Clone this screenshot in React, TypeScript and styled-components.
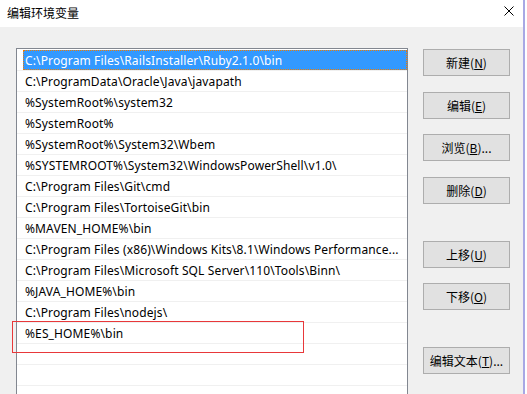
import React from "react";
import styled, { createGlobalStyle } from "styled-components";

const Global = createGlobalStyle`
  html, body { margin: 0; padding: 0; background: #ffffff; }
  body { font-family: "Noto Sans", "Noto Sans CJK SC", sans-serif; }
  * { box-sizing: border-box; }
`;

const Page = styled.div`
  display: flex;
  width: 527px;
  height: 394px;
  overflow: hidden;
`;

const Window = styled.div`
  width: 523px;
  height: 394px;
  background: #f0f0f0;
  display: flex;
  flex-direction: column;
  overflow: hidden;
`;

const Edge = styled.div`
  width: 2px;
  background: #a8a8e4;
`;

const TitleBar = styled.div`
  flex-shrink: 0;
  height: 27px;
  background: #ffffff;
  display: flex;
  align-items: center;
  justify-content: space-between;
  padding: 0 9px 2px 7px;
`;

const Title = styled.span`
  font-family: "Noto Sans CJK SC", sans-serif;
  font-size: 12px;
  color: #000;
`;

const CloseIcon = styled.svg`
  width: 10px;
  height: 10px;
  margin-bottom: 3px;
`;

const Body = styled.div`
  position: relative;
  flex: 1;
  min-height: 0;
  display: flex;
  align-items: flex-start;
  gap: 15px;
  padding: 21px 0 0 16px;
  overflow: hidden;
`;

const ListBox = styled.div`
  flex-shrink: 0;
  width: 392px;
  height: 360px;
  border: 1px solid #828790;
  background: #ffffff;
  padding-top: 1px;
  overflow: hidden;
`;

const Row = styled.div`
  height: 21px;
  border-bottom: 1px solid #f0f0f0;
  display: flex;
`;

const Item = styled.div<{ $selected?: boolean }>`
  flex: 1;
  margin-left: 6px;
  padding-left: 2px;
  display: flex;
  align-items: center;
  font-family: "Noto Sans", "Noto Sans CJK SC", sans-serif;
  font-size: 12px;
  letter-spacing: 0.13px;
  white-space: nowrap;
  color: ${(p) => (p.$selected ? "#ffffff" : "#000000")};
  background: ${(p) => (p.$selected ? "#3399ff" : "transparent")};
  outline: ${(p) => (p.$selected ? "1px dotted #f07c00" : "none")};
  outline-offset: -1px;
`;

const Buttons = styled.div`
  flex-shrink: 0;
  display: flex;
  flex-direction: column;
  padding-top: 1px;
`;

const Button = styled.button<{ $space: number }>`
  width: 87px;
  height: 27px;
  margin-top: ${(p) => p.$space}px;
  background: #e1e1e1;
  border: 1px solid #adadad;
  font-family: "Noto Sans CJK SC", sans-serif;
  font-size: 12px;
  color: #000;
  padding: 0;
  display: flex;
  align-items: center;
  justify-content: center;
`;

const Highlight = styled.div`
  position: absolute;
  left: 12px;
  top: 294px;
  width: 292px;
  height: 32px;
  border: 1px solid #e8383a;
  pointer-events: none;
`;

const paths = [
  "C:\\Program Files\\RailsInstaller\\Ruby2.1.0\\bin",
  "C:\\ProgramData\\Oracle\\Java\\javapath",
  "%SystemRoot%\\system32",
  "%SystemRoot%",
  "%SystemRoot%\\System32\\Wbem",
  "%SYSTEMROOT%\\System32\\WindowsPowerShell\\v1.0\\",
  "C:\\Program Files\\Git\\cmd",
  "C:\\Program Files\\TortoiseGit\\bin",
  "%MAVEN_HOME%\\bin",
  "C:\\Program Files (x86)\\Windows Kits\\8.1\\Windows Performance...",
  "C:\\Program Files\\Microsoft SQL Server\\110\\Tools\\Binn\\",
  "%JAVA_HOME%\\bin",
  "C:\\Program Files\\nodejs\\",
  "%ES_HOME%\\bin",
  "",
  "",
  "",
];

const buttons: { label: string; key: string; tail?: string; space: number }[] = [
  { label: "新建", key: "N", space: 0 },
  { label: "编辑", key: "E", space: 16 },
  { label: "浏览", key: "B", tail: "...", space: 15 },
  { label: "删除", key: "D", space: 16 },
  { label: "上移", key: "U", space: 37 },
  { label: "下移", key: "O", space: 15 },
  { label: "编辑文本", key: "T", tail: "...", space: 37 },
];

export default function App() {
  return (
    <>
      <Global />
      <Page>
        <Window>
          <TitleBar>
            <Title>编辑环境变量</Title>
            <CloseIcon viewBox="0 0 10 10">
              <path d="M0.5 0.5 L9.5 9.5 M9.5 0.5 L0.5 9.5" stroke="#000" strokeWidth="1" />
            </CloseIcon>
          </TitleBar>
          <Body>
            <ListBox>
              {paths.map((p, i) => (
                <Row key={i}>
                  <Item $selected={i === 0}>{p}</Item>
                </Row>
              ))}
            </ListBox>
            <Buttons>
              {buttons.map((b) => (
                <Button key={b.key} $space={b.space}>
                  {b.label}(<u>{b.key}</u>){b.tail ?? ""}
                </Button>
              ))}
            </Buttons>
            <Highlight />
          </Body>
        </Window>
        <Edge />
      </Page>
    </>
  );
}
